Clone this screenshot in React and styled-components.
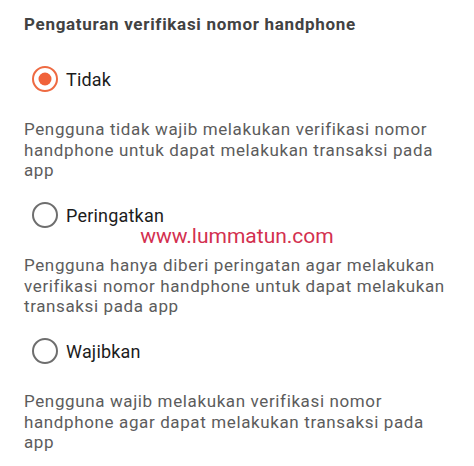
import React from 'react';
import styled, { createGlobalStyle } from 'styled-components';

const options = [
    {
        label: 'Tidak',
        checked: true,
        desc: 'Pengguna tidak wajib melakukan verifikasi nomor handphone untuk dapat melakukan transaksi pada app',
    },
    {
        label: 'Peringatkan',
        checked: false,
        desc: 'Pengguna hanya diberi peringatan agar melakukan verifikasi nomor handphone untuk dapat melakukan transaksi pada app',
    },
    {
        label: 'Wajibkan',
        checked: false,
        desc: 'Pengguna wajib melakukan verifikasi nomor handphone agar dapat melakukan transaksi pada app',
    },
];

function App() {
    return (
        <>
            <GlobalStyle />
            <Page>
                <Title>Pengaturan verifikasi nomor handphone</Title>
                <OptionList>
                    {options.map((opt) => (
                        <Option key={opt.label}>
                            <RadioRow>
                                <Radio checked={opt.checked} />
                                <Label>{opt.label}</Label>
                            </RadioRow>
                            <Desc>{opt.desc}</Desc>
                        </Option>
                    ))}
                </OptionList>
                <Watermark>www.lummatun.com</Watermark>
            </Page>
        </>
    );
}

export default App;

const GlobalStyle = createGlobalStyle`
    html, body {
        margin: 0;
        padding: 0;
        background: #ffffff;
    }
    body {
        font-family: Roboto, "Liberation Sans", sans-serif;
    }
`;

const Page = styled.div`
    position: relative;
    width: 474px;
    height: 466px;
    box-sizing: border-box;
    padding: 14px 24px 0 24px;
    overflow: hidden;
`;

const Title = styled.div`
    font-size: 17px;
    line-height: 20px;
    font-weight: 700;
    letter-spacing: 0.7px;
    color: #424242;
`;

const OptionList = styled.div`
    display: flex;
    flex-direction: column;
    gap: 10.5px;
    margin-top: 21px;
`;

const Option = styled.div`
    display: flex;
    flex-direction: column;
`;

const RadioRow = styled.div`
    display: flex;
    align-items: center;
    height: 48px;
    padding-left: 8px;
    gap: 8px;
`;

const Radio = styled.span`
    position: relative;
    width: 26px;
    height: 26px;
    box-sizing: border-box;
    border-radius: 50%;
    border: 2.6px solid ${(p) => (p.checked ? '#ee6a42' : '#6e6e6e')};

    &::after {
        content: '';
        display: ${(p) => (p.checked ? 'block' : 'none')};
        position: absolute;
        left: 50%;
        top: 50%;
        width: 13px;
        height: 13px;
        border-radius: 50%;
        background: #f0623a;
        transform: translate(-50%, -50%);
    }
`;

const Label = styled.span`
    font-size: 18px;
    letter-spacing: 0.2px;
    color: #1c1c1c;
`;

const Desc = styled.div`
    margin-top: 16px;
    font-size: 17px;
    line-height: 20.5px;
    letter-spacing: 0.62px;
    color: #5c5c5c;
`;

// watermark over the content
const Watermark = styled.div`
    position: absolute;
    left: 0;
    right: 0;
    top: 224px;
    text-align: center;
    font-size: 21px;
    line-height: 24px;
    color: #d3304f;
`;
